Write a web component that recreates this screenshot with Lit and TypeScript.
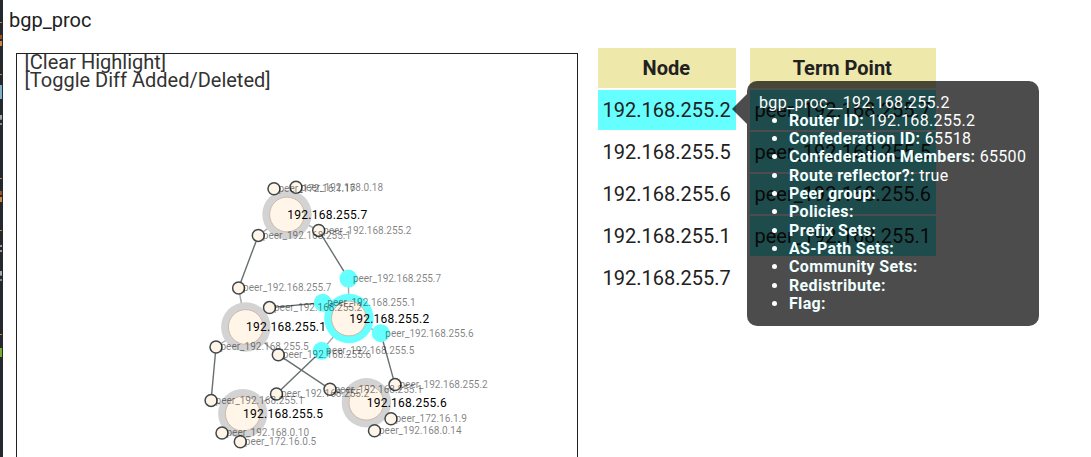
import { LitElement, html, svg, css } from "lit";
import { customElement } from "lit/decorators.js";
import { classMap } from "lit/directives/class-map.js";

type Point = { x: number; y: number; name: string; lit?: boolean };

const nodes: Point[] = [
  { x: 287, y: 214.5, name: "192.168.255.7" },
  { x: 245.8, y: 327, name: "192.168.255.1" },
  { x: 348.9, y: 318.5, name: "192.168.255.2", lit: true },
  { x: 242.8, y: 413.6, name: "192.168.255.5" },
  { x: 366.4, y: 402.7, name: "192.168.255.6" },
];

const peers: Point[] = [
  { x: 274, y: 188.7, name: "peer_172.16.1.17" },
  { x: 296, y: 187.3, name: "peer_192.168.0.18" },
  { x: 258.3, y: 235.4, name: "peer_192.168.255.1" },
  { x: 318.7, y: 230.4, name: "peer_192.168.255.2" },
  { x: 238.6, y: 288, name: "peer_192.168.255.7" },
  { x: 269.5, y: 307.6, name: "peer_192.168.255.2" },
  { x: 216, y: 347, name: "peer_192.168.255.5" },
  { x: 278.3, y: 354.7, name: "peer_192.168.255.6" },
  { x: 348.4, y: 278.6, name: "peer_192.168.255.7", lit: true },
  { x: 322.8, y: 302.7, name: "peer_192.168.255.1", lit: true },
  { x: 380.8, y: 333.2, name: "peer_192.168.255.6", lit: true },
  { x: 321.6, y: 350.8, name: "peer_192.168.255.5", lit: true },
  { x: 211.1, y: 400.4, name: "peer_192.168.255.1" },
  { x: 276.5, y: 394, name: "peer_192.168.255.2" },
  { x: 330, y: 389.2, name: "peer_192.168.255.1" },
  { x: 395, y: 384.6, name: "peer_192.168.255.2" },
  { x: 222, y: 433, name: "peer_192.168.0.10" },
  { x: 240.3, y: 441.7, name: "peer_172.16.0.5" },
  { x: 391, y: 418.7, name: "peer_172.16.1.9" },
  { x: 374.5, y: 430.7, name: "peer_192.168.0.14" },
];

// peer to peer
const links = [[2, 4], [3, 8], [5, 9], [6, 12], [7, 14], [11, 13], [10, 15]];
// node to peer
const supports = [
  [0, 0], [0, 1], [0, 2], [0, 3], [1, 4], [1, 5], [1, 6], [1, 7], [2, 8], [2, 9],
  [2, 10], [2, 11], [3, 12], [3, 13], [3, 16], [3, 17], [4, 14], [4, 15], [4, 18], [4, 19],
];

const line = (a: Point, b: Point, cls: string) =>
  svg`<line class=${cls} x1=${a.x} y1=${a.y} x2=${b.x} y2=${b.y}></line>`;

@customElement("topology-graph")
class TopologyGraph extends LitElement {
  static styles = css`
    :host { display: block; width: 560px; height: 480px; border: 1px solid #212121; overflow: hidden; }
    .actions { padding: 0 7.5px; font-size: 20px; line-height: 18px; color: #333; height: 36px; margin-top: -1px; }
    .action { display: block; }
    .canvas { display: block; margin-top: -35px; width: 560px; height: 480px; }
    .support { stroke: #a9a9a9; stroke-width: 1.4; }
    .link { stroke: #696f70; stroke-width: 1.4; }
    .ring { fill: #d3d3d3; }
    .ring.lit { fill: #66ffff; }
    .core { fill: #fff5e9; stroke: #cdb9a8; stroke-width: 1; }
    .peer { fill: #fff5e9; stroke: #40484a; stroke-width: 1.5; }
    .peer.lit { fill: #66ffff; stroke: #66ffff; stroke-width: 5; }
    .name { font-size: 12px; letter-spacing: 0.25px; fill: #000; }
    .peer-name { font-size: 10px; fill: #000; fill-opacity: 0.5; }
  `;
  render() {
    return html`
      <div class="actions">
        <span class="action">[Clear Highlight]</span>
        <span class="action">[Toggle Diff Added/Deleted]</span>
      </div>
      <svg class="canvas" viewBox="17 54 560 480">
        ${supports.map(([n, p]) => line(nodes[n], peers[p], "support"))}
        ${links.map(([a, b]) => line(peers[a], peers[b], "link"))}
        ${nodes.map((n) => svg`
          <circle class=${classMap({ ring: true, lit: !!n.lit })} cx=${n.x} cy=${n.y} r="24.7"></circle>
          <circle class="core" cx=${n.x} cy=${n.y} r="17.4"></circle>`)}
        ${peers.map((p) => svg`
          <circle class=${classMap({ peer: true, lit: !!p.lit })} cx=${p.x} cy=${p.y} r=${p.lit ? 6.5 : 6}></circle>`)}
        ${peers.map((p) => svg`<text class="peer-name" x=${p.x + 4.5} y=${p.y + 3.4}>${p.name}</text>`)}
        ${nodes.map((n) => svg`<text class="name" x=${n.x + 0.3} y=${n.y + 4.4}>${n.name}</text>`)}
      </svg>
    `;
  }
}

@customElement("node-tooltip")
class NodeTooltip extends LitElement {
  static styles = css`
    :host {
      display: block; box-sizing: border-box; width: 292px; height: 245px; padding: 12.6px 12px;
      border-radius: 10px; background: rgba(0, 0, 0, 0.7); color: #fff;
      font-size: 16px; line-height: 18.3px; letter-spacing: 0.34px; white-space: nowrap;
    }
    .arrow {
      position: absolute; left: -15px; top: 13px; width: 15px; height: 30px;
      background: rgba(0, 0, 0, 0.7); clip-path: polygon(100% 0, 0 50%, 100% 100%);
    }
    .list { margin: 0; padding: 0 0 0 30px; }
    .key { font-weight: 700; color: azure; }
  `;
  render() {
    const rows = [
      ["Router ID", "192.168.255.2"], ["Confederation ID", "65518"], ["Confederation Members", "65500"],
      ["Route reflector?", "true"], ["Peer group", ""], ["Policies", ""], ["Prefix Sets", ""],
      ["AS-Path Sets", ""], ["Community Sets", ""], ["Redistribute", ""], ["Flag", ""],
    ];
    return html`
      <div class="arrow"></div>
      <div>bgp_proc__192.168.255.2</div>
      <ul class="list">
        ${rows.map(([k, v]) => html`<li><span class="key">${k}:</span> ${v}</li>`)}
      </ul>
    `;
  }
}

@customElement("app-root")
class AppRoot extends LitElement {
  static styles = css`
    :host {
      display: flex; position: relative; height: 457px; overflow: hidden; background: #fff;
      font-family: Roboto, sans-serif; font-size: 20px; color: #212121;
    }
    .edge { position: relative; width: 3px; height: 457px; background: #25292e; border-right: 0; flex: none; }
    .mark { position: absolute; left: 0; width: 2px; }
    .page { flex: 1; padding-left: 6px; }
    .title { height: 48px; line-height: 40px; }
    .body { display: flex; align-items: flex-start; }
    .graph { margin: 5px 20px 0 7px; flex: none; }
    .tables { display: flex; gap: 14px; }
    .column { display: grid; grid-auto-rows: 40px; gap: 2px; }
    .cell { padding: 0 5px 0 4.5px; line-height: 40px; white-space: nowrap; }
    .head { padding-right: 6px; font-weight: 700; text-align: center; background: #eee8aa; }
    .lit { background: #66ffff; }
    .nodes { width: 138px; }
    .points { width: 186px; }
    .tip { position: absolute; left: 747px; top: 81px; }
  `;
  render() {
    const marks: [number, number, string][] = [
      [22, 1, "#b88a42"], [35, 4, "#9c5127"], [41, 5, "#c98742"], [74, 1, "#b88a42"], [85, 14, "#7eb0cc"],
      [115, 4, "#aaa79b"], [119, 1, "#5488b0"], [123, 2, "#898984"], [178, 1, "#b88a42"], [191, 4, "#9c5127"],
      [197, 5, "#c98742"], [230, 1, "#b88a42"], [245, 2, "#999990"], [250, 2, "#999990"], [271, 4, "#aaa79b"],
      [275, 1, "#5488b0"], [279, 2, "#898984"], [334, 1, "#b88a42"], [348, 9, "#75ad2c"],
    ];
    const ids = ["2", "5", "6", "1", "7"];
    return html`
      <div class="edge">
        ${marks.map(([top, h, c]) => html`<div class="mark" style="top:${top}px;height:${h}px;background:${c}"></div>`)}
      </div>
      <div class="page">
        <div class="title">bgp_proc</div>
        <div class="body">
          <topology-graph class="graph"></topology-graph>
          <div class="tables">
            <div class="column nodes">
              <div class="cell head">Node</div>
              ${ids.map((id, i) => html`<div class=${classMap({ cell: true, lit: i === 0 })}>192.168.255.${id}</div>`)}
            </div>
            <div class="column points">
              <div class="cell head">Term Point</div>
              ${["7", "5", "6", "1"].map((id) => html`<div class="cell lit">peer_192.168.255.${id}</div>`)}
            </div>
          </div>
        </div>
      </div>
      <node-tooltip class="tip"></node-tooltip>
    `;
  }
}
